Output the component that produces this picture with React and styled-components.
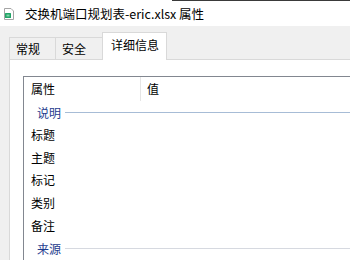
import React from 'react';
import styled, { createGlobalStyle } from 'styled-components';

const GlobalStyle = createGlobalStyle`
  html, body {
    margin: 0;
    padding: 0;
    width: 350px;
    height: 260px;
    overflow: hidden;
    background: #f0f0f0;
  }
  * {
    box-sizing: border-box;
  }
`;

const FONT = `"Noto Sans CJK SC", "Noto Sans", "Liberation Sans", sans-serif`;

const Window = styled.div`
  width: 350px;
  height: 260px;
  display: flex;
  flex-direction: column;
  background: #f0f0f0;
  font-family: ${FONT};
  color: #000;
  overflow: hidden;
`;

const TitleBar = styled.div`
  height: 26px;
  flex: none;
  display: flex;
  align-items: center;
  padding-left: 4px;
  background: #fff;
  border-top: 1px solid transparent;
  border-image: linear-gradient(to right, transparent 172px, #3a3a3a 172px) 1;
  border-left: 0;
  border-right: 0;
  border-bottom: 0;
`;

const TitleText = styled.span`
  margin-left: 11px;
  font-size: 12.5px;
  line-height: 26px;
  white-space: nowrap;
`;

const Body = styled.div`
  flex: 1;
  display: flex;
  flex-direction: column;
  padding: 6px 0 0 9px;
  min-height: 0;
`;

const TabStrip = styled.div`
  display: flex;
  align-items: flex-end;
  height: 27px;
  flex: none;
  position: relative;
  z-index: 1;
`;

const Tab = styled.div`
  width: ${p => p.$w}px;
  height: ${p => (p.$active ? 28 : 22)}px;
  margin: ${p => (p.$active ? '0 -1px -1px 0' : '0')};
  padding-left: ${p => (p.$active ? 8 : 6)}px;
  padding-top: ${p => (p.$active ? 3 : 2)}px;
  font-size: 12px;
  line-height: 18px;
  background: ${p => (p.$active ? '#fff' : '#f0f0f0')};
  border: 1px solid #d9d9d9;
  border-right: ${p => (p.$active ? '1px solid #d9d9d9' : 'none')};
  border-bottom: none;
  white-space: nowrap;
`;

const Panel = styled.div`
  flex: 1;
  min-height: 0;
  background: #fff;
  border: 1px solid #d9d9d9;
  border-right: none;
  border-bottom: none;
  padding: 16px 0 0 13px;
  overflow: hidden;
`;

const ListView = styled.div`
  height: 100%;
  border: 1px solid #828790;
  border-right: none;
  border-bottom: none;
  font-size: 12px;
`;

const HeaderRow = styled.div`
  display: flex;
  height: 24px;
  align-items: stretch;
`;

const HeaderCell = styled.div`
  width: ${p => (p.$w ? `${p.$w}px` : 'auto')};
  flex: ${p => (p.$w ? 'none' : 1)};
  padding-left: ${p => p.$pad}px;
  line-height: 24px;
  border-right: ${p => (p.$divider ? '1px solid #e5e5e5' : 'none')};
`;

const GroupRow = styled.div`
  display: flex;
  align-items: center;
  height: 22.75px;
  padding-left: 13px;
  color: #1e3c8e;
  &::after {
    content: '';
    flex: 1;
    height: 1px;
    margin-left: 4px;
    background: ${p => p.$line};
  }
`;

const ItemRow = styled.div`
  height: 22.75px;
  line-height: 22.75px;
  padding-left: 7px;
  white-space: nowrap;
`;

const FileIcon = () => (
  <svg width="10" height="12" viewBox="0 0 10 12">
    <path d="M0.5 0.5 H7 L9.5 3 V11.5 H0.5 Z" fill="#fff" stroke="#a5a5a5" />
    <rect x="1" y="5" width="6" height="5" rx="0.5" fill="#21a366" />
    <rect x="2.5" y="6.5" width="3" height="2" fill="#7fd3a6" />
  </svg>
);

const tabs = [
  { label: '常规', w: 46 },
  { label: '安全', w: 47 },
  { label: '详细信息', w: 65, active: true },
];

const rows = [
  { group: '说明', line: '#a7bcd6' },
  { item: '标题' },
  { item: '主题' },
  { item: '标记' },
  { item: '类别' },
  { item: '备注' },
  { group: '来源', line: '#d6d9e0' },
];

export default function App() {
  return (
    <>
      <GlobalStyle />
      <Window>
        <TitleBar>
          <FileIcon />
          <TitleText>交换机端口规划表-eric.xlsx 属性</TitleText>
        </TitleBar>
        <Body>
          <TabStrip>
            {tabs.map(t => (
              <Tab key={t.label} $w={t.w} $active={t.active}>
                {t.label}
              </Tab>
            ))}
          </TabStrip>
          <Panel>
            <ListView>
              <HeaderRow>
                <HeaderCell $w={117} $pad={7} $divider>
                  属性
                </HeaderCell>
                <HeaderCell $pad={6}>值</HeaderCell>
              </HeaderRow>
              {rows.map((r, i) =>
                r.group ? (
                  <GroupRow key={i} $line={r.line}>
                    {r.group}
                  </GroupRow>
                ) : (
                  <ItemRow key={i}>{r.item}</ItemRow>
                )
              )}
            </ListView>
          </Panel>
        </Body>
      </Window>
    </>
  );
}
